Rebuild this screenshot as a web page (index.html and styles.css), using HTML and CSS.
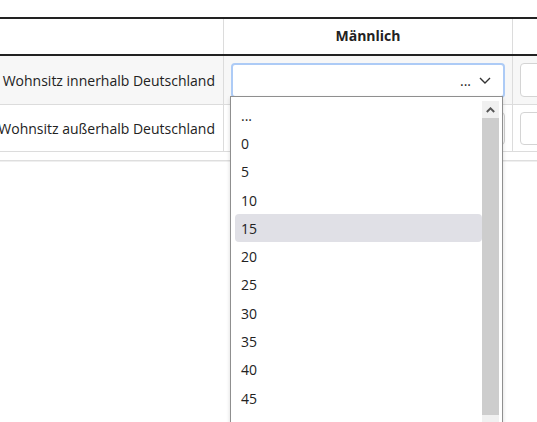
FILE: index.html
```html
<!DOCTYPE html>
<html lang="de">
<head>
<meta charset="utf-8">
<title>Tabelle</title>
<link rel="stylesheet" href="styles.css">
</head>
<body>
<div class="page">
  <div class="table">
    <div class="row head">
      <div class="cell label"></div>
      <div class="cell mid">Männlich</div>
      <div class="cell last"></div>
    </div>
    <div class="row odd">
      <div class="cell label">Wohnsitz innerhalb Deutschland</div>
      <div class="cell mid">
        <div class="select focus">
          <span class="value">...</span>
          <svg class="chev" width="12" height="7" viewBox="0 0 12 7"><path d="M1 1 L6 6 L11 1" fill="none" stroke="#333" stroke-width="1.4"/></svg>
        </div>
      </div>
      <div class="cell last"><div class="input"></div></div>
    </div>
    <div class="row">
      <div class="cell label">Wohnsitz außerhalb Deutschland</div>
      <div class="cell mid"><div class="select"></div></div>
      <div class="cell last"><div class="input"></div></div>
    </div>
  </div>
  <div class="footer-line"></div>

  <div class="dropdown">
    <ul class="options">
      <li>...</li>
      <li>0</li>
      <li>5</li>
      <li>10</li>
      <li class="hover">15</li>
      <li>20</li>
      <li>25</li>
      <li>30</li>
      <li>35</li>
      <li>40</li>
      <li>45</li>
    </ul>
    <div class="scrollbar">
      <div class="sb-btn">
        <svg width="9" height="6" viewBox="0 0 9 6"><path d="M0.8 5 L4.5 1.3 L8.2 5" fill="none" stroke="#555" stroke-width="1.9"/></svg>
      </div>
      <div class="sb-thumb"></div>
      <div class="sb-track"></div>
    </div>
  </div>
</div>
</body>
</html>
```

FILE: styles.css
```css
* { box-sizing: border-box; }
html, body { margin: 0; padding: 0; }
body {
  font-family: "Open Sans", "Noto Sans", sans-serif;
  font-size: 14px;
  color: #222;
  background: #fff;
  width: 537px;
  height: 422px;
  overflow: hidden;
}
.page {
  position: relative;
  padding-top: 17px;
}
.table {
  width: 537px;
  overflow: hidden;
}
.row {
  display: grid;
  grid-template-columns: 224px 289px 120px;
  border-bottom: 1px solid #dcdcdc;
}
.row.head {
  border-top: 2px solid #222;
  border-bottom: 2px solid #222;
  height: 39px;
}
.row.odd { background: #f7f7f7; height: 49px; }
.row:not(.head):not(.odd) { height: 47px; }
.cell {
  display: flex;
  align-items: center;
  border-right: 1px solid #dcdcdc;
  padding: 0 7px;
}
.cell.label {
  justify-content: flex-end;
  white-space: nowrap;
  padding-right: 8px;
}
.head .cell.mid {
  justify-content: center;
  font-weight: 700;
  padding-bottom: 2px;
}
.cell.last { border-right: none; }
.select {
  width: 274px;
  height: 35px;
  border: 1px solid #cfcfcf;
  border-radius: 4px;
  background: #fff;
  display: flex;
  align-items: center;
  justify-content: flex-end;
  padding-right: 12px;
}
.select.focus {
  border: 2px solid #adcbf6;
}
.value { margin-right: 8px; line-height: 1; padding-top: 2px; }
.chev { display: block; }
.input {
  width: 60px;
  height: 34px;
  border: 1px solid #d4d4d4;
  border-radius: 4px;
  background: #fff;
}
.row:not(.head):not(.odd) .input,
.row:not(.head):not(.odd) .select { height: 33px; }
.footer-line {
  margin-top: 8px;
  height: 2px;
  background: #dedede;
  border-bottom: 1px solid #efefef;
}
.dropdown {
  position: absolute;
  left: 230px;
  top: 96px;
  width: 273px;
  height: 340px;
  border: 1px solid #8f8f8f;
  background: #fff;
  display: flex;
  padding: 4px 3px 0 4px;
  box-shadow: 0 2px 4px rgba(0,0,0,0.15);
}
.options {
  list-style: none;
  margin: 0;
  padding: 0;
  flex: 1;
}
.options li {
  height: 28.3px;
  display: flex;
  align-items: center;
  padding-left: 6px;
  border-radius: 4px;
}
.options li.hover { background: #e0e0e6; }
.scrollbar {
  width: 17px;
  display: flex;
  flex-direction: column;
}
.sb-btn {
  height: 17px;
  background: #f0f0f0;
  display: flex;
  align-items: center;
  justify-content: center;
}
.sb-thumb {
  height: 297px;
  background: #cdcdcd;
}
.sb-track {
  flex: 1;
  background: #f0f0f0;
}
```
